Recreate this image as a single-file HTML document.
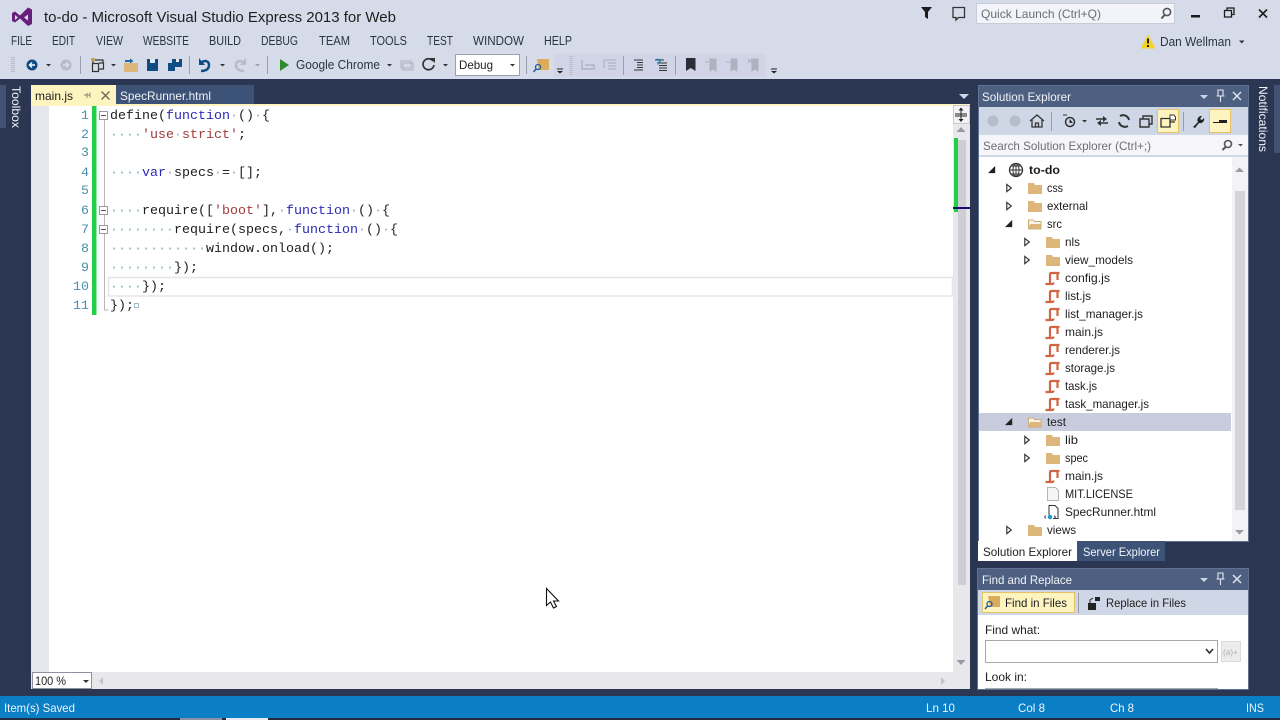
<!DOCTYPE html>
<html><head><meta charset="utf-8"><title>to-do - Microsoft Visual Studio Express 2013 for Web</title>
<style>
html,body{margin:0;padding:0;background:#2b3752;overflow:hidden;width:1280px;height:720px}
svg{display:block}
text{font-family:"Liberation Sans",sans-serif;font-size:12px;fill:#1e1e1e;white-space:pre}
.m{fill:#2b3440;font-size:12.5px}
.t{font-size:12px;fill:#1e1e1e}
.w{fill:#f2f4f8}
.c{font-family:"Liberation Mono",monospace;font-size:13.33px;fill:#1e1e1e}
.n{font-family:"Liberation Mono",monospace;font-size:13.33px;fill:#4c8fa8}
.k{fill:#2a2ab8}.s{fill:#a33a3a}.d{fill:#8fb2c0}
</style></head><body>
<svg width="1280" height="720" viewBox="0 0 1280 720" xmlns="http://www.w3.org/2000/svg">
<defs>
<symbol id="fo" viewBox="0 0 16 16" overflow="visible"><path d="M1 3h6l1 2h7v9H1z" fill="#dcb67a"/></symbol>
<symbol id="fp" viewBox="0 0 16 16" overflow="visible"><path d="M1.500 13V4h5l1 1.500h6.500V13z" fill="#f7f3e8" stroke="#c9ad78"/><path d="M1 13l2-5h12l-2 5z" fill="#dcb67a"/></symbol>
<symbol id="js" viewBox="0 0 16 16" overflow="visible"><path d="M5 13V4.500Q5 3 6.500 3H14.500M12.500 3V10M0.500 14H7Q8.500 14 8.500 12.500" fill="none" stroke="#cf6644" stroke-width="2.200"/></symbol>
<symbol id="gr" viewBox="0 0 10 10"><path d="M2 1L7 5 2 9z" fill="#fff" stroke="#333" stroke-width="1.300"/></symbol>
<symbol id="ex" viewBox="0 0 10 10"><path d="M8 1v8H0z" fill="#222"/></symbol>
</defs>

<!-- chrome background -->
<rect width="1280" height="79" fill="#d6dbe9"/>
<rect y="79" width="1280" height="641" fill="#2b3752"/>

<!-- logo + title -->
<path fill-rule="evenodd" fill="#68217a" d="M12 13l3-1.500 5 4L28 7.500l4 2V24l-4 2-8-7.500-5 4-3-1.500zM15 15v5l3-2.500zM24 17.500l4 3v-6z"/>
<text x="44" y="22" font-size="15" style="font-size:15px" fill="#1e1e1e" textLength="352" lengthAdjust="spacingAndGlyphs">to-do - Microsoft Visual Studio Express 2013 for Web</text>

<!-- menu -->
<text class="m" x="11" y="45" textLength="21" lengthAdjust="spacingAndGlyphs">FILE</text>
<text class="m" x="52" y="45" textLength="23" lengthAdjust="spacingAndGlyphs">EDIT</text>
<text class="m" x="96" y="45" textLength="27" lengthAdjust="spacingAndGlyphs">VIEW</text>
<text class="m" x="143" y="45" textLength="46" lengthAdjust="spacingAndGlyphs">WEBSITE</text>
<text class="m" x="209" y="45" textLength="32" lengthAdjust="spacingAndGlyphs">BUILD</text>
<text class="m" x="261" y="45" textLength="37" lengthAdjust="spacingAndGlyphs">DEBUG</text>
<text class="m" x="319" y="45" textLength="31" lengthAdjust="spacingAndGlyphs">TEAM</text>
<text class="m" x="370" y="45" textLength="37" lengthAdjust="spacingAndGlyphs">TOOLS</text>
<text class="m" x="427" y="45" textLength="26" lengthAdjust="spacingAndGlyphs">TEST</text>
<text class="m" x="473" y="45" textLength="51" lengthAdjust="spacingAndGlyphs">WINDOW</text>
<text class="m" x="544" y="45" textLength="28" lengthAdjust="spacingAndGlyphs">HELP</text>

<!-- top right -->
<path d="M921 7h11l-4 5v7l-3-2v-5z" fill="#1b1b1b"/>
<path d="M953 7.500h11.500v10h-6l-2.500 2.500v-2.500h-3z" fill="none" stroke="#333" stroke-width="1.300"/>
<rect x="976.500" y="3.500" width="198" height="20" fill="#f3f4f9" stroke="#c8ccda"/>
<text x="981" y="18" fill="#6d6d75" style="fill:#6d6d75" textLength="120" lengthAdjust="spacingAndGlyphs">Quick Launch (Ctrl+Q)</text>
<circle cx="1167" cy="12" r="3.600" fill="none" stroke="#555" stroke-width="1.600"/><path d="M1164.500 15l-3 3.500" stroke="#555" stroke-width="2"/>
<rect x="1191" y="15" width="9" height="2.500" fill="#1b1b1b"/>
<path d="M1224.500 10.500h7v6.500h-7zM1227 10.500V8h7v6.500h-2.500" fill="none" stroke="#1b1b1b" stroke-width="1.300"/>
<path d="M1259 9.500l8 8M1267 9.500l-8 8" stroke="#1b1b1b" stroke-width="1.600"/>
<path d="M1148 34.500l7.500 14h-15z" fill="#f5d327"/><rect x="1147" y="38.500" width="2" height="5" fill="#222"/><rect x="1147" y="45" width="2" height="2" fill="#222"/>
<text x="1160" y="46" class="m" textLength="71" lengthAdjust="spacingAndGlyphs">Dan Wellman</text>
<path d="M1239 40.500h5.500l-2.700 3z" fill="#333"/>

<!-- toolbar -->
<path d="M12 57v15M14 57v15" stroke="#9a9eaa" stroke-width="1" stroke-dasharray="1 1"/>
<circle cx="32" cy="65" r="5.500" fill="#0e4c84"/><path d="M35 65h-5M32 62.500L29.500 65l2.500 2.500" stroke="#fff" stroke-width="1.400" fill="none"/>
<path d="M46 64h5l-2.500 2.500z" fill="#333"/>
<circle cx="66" cy="65" r="5.500" fill="#b8bcc8"/><path d="M63 65h5M66 62.500l2.500 2.500-2.500 2.500" stroke="#dde0ea" stroke-width="1.400" fill="none"/>
<rect x="80" y="56" width="1" height="18" fill="#9a9eaa"/>
<path d="M93 63v-3h10v3M92.500 63.500h6v8h-6zM99 63h4.500v6H99" fill="none" stroke="#333" stroke-width="1.200"/><rect x="91" y="58" width="4" height="3" fill="#c9a35a"/>
<path d="M111 64h5l-2.500 2.500z" fill="#333"/>
<path d="M124 63h14v9h-14z" fill="#dcb67a"/><path d="M125 61h6" stroke="#1f6aa5" stroke-width="2"/><path d="M130 58.500l3.500 2.500-3.500 2.500z" fill="#1f6aa5"/>
<path d="M147 59h11v12h-11z" fill="#0e4c84"/><rect x="150" y="59" width="5" height="4" fill="#e5e8f2"/>
<path d="M168 63h7v8h-7zM172 59h10v8h-7v-4h-3z" fill="#0e4c84"/><rect x="176" y="59" width="3" height="3" fill="#e5e8f2"/>
<rect x="189" y="56" width="1" height="18" fill="#9a9eaa"/>
<path d="M201 71c5 0 8-2 8-6s-4-5-7-3" fill="none" stroke="#0e4c84" stroke-width="2.500"/><path d="M199 58v7h6z" fill="#0e4c84"/>
<path d="M220 64h5l-2.500 2.500z" fill="#333"/>
<path d="M244 71c-5 0-8-2-8-6s4-5 7-3" fill="none" stroke="#b8bcc8" stroke-width="2.500"/><path d="M246 58v7h-6z" fill="#b8bcc8"/>
<path d="M255 64h5l-2.500 2.500z" fill="#9ea2ae"/>
<rect x="267" y="56" width="1" height="18" fill="#9a9eaa"/>
<path d="M280 59l9 6-9 6z" fill="#2e8b2e"/>
<text x="296" y="69" class="m" textLength="84" lengthAdjust="spacingAndGlyphs">Google Chrome</text>
<path d="M387 64h5l-2.500 2.500z" fill="#333"/>
<path d="M401 61h10v7h-10zM403 63h10v7h-10z" fill="none" stroke="#aeb2bf"/>
<path d="M433 61a5.500 5.500 0 1 0 1 4" fill="none" stroke="#333" stroke-width="1.700"/><path d="M430 58h5v5z" fill="#333"/>
<path d="M443 64h5l-2.500 2.500z" fill="#333"/>
<rect x="455.500" y="54.500" width="64" height="21" fill="#fff" stroke="#9ba0ae"/>
<text x="459" y="69" class="t" textLength="34" lengthAdjust="spacingAndGlyphs">Debug</text>
<path d="M510 64h5l-2.500 2.500z" fill="#333"/>
<rect x="526" y="56" width="1" height="18" fill="#9a9eaa"/>
<path d="M537 59h12v11h-10z" fill="#dcab5c"/><circle cx="538" cy="67" r="2.500" fill="none" stroke="#1f5e98" stroke-width="1.300"/><path d="M536 69l-2.500 3" stroke="#1f5e98" stroke-width="1.500"/>
<rect x="554" y="54" width="211" height="23" fill="#d0d4e6"/>
<path d="M557 69h6" stroke="#222" stroke-width="1"/><path d="M557 71h6l-3 2.500z" fill="#222"/>
<path d="M570 56v20M572 56v20" stroke="#a4a8b5" stroke-width="1" stroke-dasharray="1 1"/>
<path d="M582 60v9h12v-4h-9" fill="none" stroke="#aeb2bf" stroke-width="1.400"/>
<path d="M604 60h12M608 63h8M608 66h8M608 69h8M604 60v8" fill="none" stroke="#aeb2bf" stroke-width="1.300"/>
<rect x="623" y="56" width="1" height="19" fill="#9a9eaa"/>
<path d="M634 60h9M637 62.500h6M637 65h6M637 67.500h6M634 70h9" stroke="#333" stroke-width="1"/>
<path d="M655 60h9M659 63h8M659 65.500h8M659 68h8M659 70.500h8" stroke="#333" stroke-width="1"/><path d="M656 59.500h4v3h-2v2" fill="none" stroke="#1a7ca0" stroke-width="1.300"/>
<rect x="675" y="56" width="1" height="19" fill="#9a9eaa"/>
<path d="M686 58h9.500v13l-4.700-3-4.800 3z" fill="#2d2d38"/>
<path d="M710 59h6v12l-3-2-3 2zM705 62h4" fill="#aeb2bf" stroke="#aeb2bf"/>
<path d="M731 59h6v12l-3-2-3 2zM726 62h4" fill="#aeb2bf" stroke="#aeb2bf"/>
<path d="M752 59h6v12l-3-2-3 2zM748 59l4 4M752 59l-4 4" fill="#aeb2bf" stroke="#aeb2bf"/>
<path d="M771 69h6" stroke="#222"/><path d="M771 71h6l-3 2.500z" fill="#222"/>

<!-- toolbox -->
<rect x="0" y="85" width="6" height="43" fill="#435272"/>
<text transform="translate(12 86) rotate(90)" x="0" y="0" class="w" textLength="42" lengthAdjust="spacingAndGlyphs">Toolbox</text>

<!-- tabs -->
<rect x="31" y="85" width="85" height="19" fill="#fdf4bf"/>
<text x="35" y="100" class="t" textLength="38" lengthAdjust="spacingAndGlyphs">main.js</text>
<path d="M84 95h6M87 93v5M90 92.500v5" stroke="#8a8468" stroke-width="1" fill="none"/>
<path d="M101.500 91.500l8 8M109.500 91.500l-8 8" stroke="#6f6a55" stroke-width="1.400"/>
<rect x="116" y="85" width="138" height="19" fill="#3d5277"/>
<text x="120" y="100" class="w" textLength="91" lengthAdjust="spacingAndGlyphs">SpecRunner.html</text>
<path d="M959 94h10l-5 5z" fill="#cfd6e5"/>
<rect x="31" y="104" width="939" height="2" fill="#fdf4bf"/>

<!-- editor -->
<rect x="31" y="106" width="922" height="566" fill="#fff"/>
<rect x="31" y="106" width="18" height="566" fill="#e6e7ed"/>
<rect x="92" y="106" width="4.500" height="209" fill="#22d048"/>
<path d="M104.500 120v190h4M104.500 215v15" stroke="#b8b8b8" fill="none"/>
<rect x="108.500" y="277.500" width="844" height="18.500" fill="#fff" stroke="#e6e6e6" stroke-width="1.500"/>
<g fill="#fff" stroke="#9a9a9a"><rect x="99.500" y="111.500" width="8" height="8"/><rect x="99.500" y="206.500" width="8" height="8"/><rect x="99.500" y="225.500" width="8" height="8"/></g>
<path d="M101 115.500h5M101 210.500h5M101 229.500h5" stroke="#555"/>
<g text-anchor="end">
<text class="n" x="89" y="119">1</text><text class="n" x="89" y="138">2</text><text class="n" x="89" y="156">3</text><text class="n" x="89" y="176">4</text><text class="n" x="89" y="194">5</text><text class="n" x="89" y="214">6</text><text class="n" x="89" y="233">7</text><text class="n" x="89" y="252">8</text><text class="n" x="89" y="271">9</text><text class="n" x="89" y="290">10</text><text class="n" x="89" y="309">11</text>
</g>
<text class="c" x="110" y="119">define(<tspan class="k">function</tspan><tspan class="d">·</tspan>()<tspan class="d">·</tspan>{</text>
<text class="c" x="110" y="138"><tspan class="d">····</tspan><tspan class="s">'use</tspan><tspan class="d">·</tspan><tspan class="s">strict'</tspan>;</text>
<text class="c" x="110" y="176"><tspan class="d">····</tspan><tspan class="k">var</tspan><tspan class="d">·</tspan>specs<tspan class="d">·</tspan>=<tspan class="d">·</tspan>[];</text>
<text class="c" x="110" y="214"><tspan class="d">····</tspan>require([<tspan class="s">'boot'</tspan>],<tspan class="d">·</tspan><tspan class="k">function</tspan><tspan class="d">·</tspan>()<tspan class="d">·</tspan>{</text>
<text class="c" x="110" y="233"><tspan class="d">········</tspan>require(specs,<tspan class="d">·</tspan><tspan class="k">function</tspan><tspan class="d">·</tspan>()<tspan class="d">·</tspan>{</text>
<text class="c" x="110" y="252"><tspan class="d">············</tspan>window.onload();</text>
<text class="c" x="110" y="271"><tspan class="d">········</tspan>});</text>
<text class="c" x="110" y="290"><tspan class="d">····</tspan>});</text>
<text class="c" x="110" y="309">});</text>
<rect x="134.500" y="303.500" width="4" height="4" fill="none" stroke="#9dbcc8"/>

<!-- editor scrollbars -->
<rect x="953" y="106" width="17" height="583" fill="#e8e8ec"/>
<rect x="953.500" y="105.500" width="16" height="18" fill="#f3f3f6" stroke="#c9c9d0"/>
<path d="M961 108v13M955 114h12M955 116h12" stroke="#222" stroke-width="1"/><path d="M958.500 110.500l2.500-3 2.500 3zM958.500 119l2.500 3 2.500-3z" fill="#222"/>
<path d="M956.500 132l4.500-5 4.500 5z" fill="#9a9aa0"/>
<rect x="958" y="140" width="8" height="445" fill="#cdcdd3"/>
<rect x="954" y="138" width="4" height="74" fill="#22d048"/>
<rect x="953" y="207" width="17" height="2" fill="#10106e"/>
<path d="M956.500 660l4.500 5 4.500-5z" fill="#9a9aa0"/>
<rect x="31" y="672" width="939" height="17" fill="#e8e8ec"/>
<rect x="32.500" y="672.500" width="59" height="16" fill="#fff" stroke="#8e92a0"/>
<text x="35" y="685" class="t" textLength="31" lengthAdjust="spacingAndGlyphs">100 %</text>
<path d="M83 680h6l-3 3z" fill="#333"/>
<path d="M103 677v8l-4-4z" fill="#c4c4c8"/><path d="M941 677v8l4-4z" fill="#c4c4c8"/>

<!-- solution explorer -->
<rect x="978" y="85" width="271" height="457" fill="#5f7291"/>
<rect x="979" y="86" width="269" height="21" fill="#4d6082"/>
<text x="982" y="101" class="w" textLength="89" lengthAdjust="spacingAndGlyphs">Solution Explorer</text>
<path d="M1200 95h8l-4 4z" fill="#cfd6e5"/>
<path d="M1218 90h5v6h-5zM1216.500 96h8M1220.500 96v6" stroke="#e5e8f2" fill="none" stroke-width="1.100"/>
<path d="M1233 92l8 8M1241 92l-8 8" stroke="#dfe3ec" stroke-width="1.500"/>
<rect x="979" y="107" width="269" height="28" fill="#cfd6e5"/>
<circle cx="993" cy="121" r="5.500" fill="#b8bcc8"/><circle cx="1015" cy="121" r="5.500" fill="#b8bcc8"/>
<path d="M1030 121l7-6 7 6M1032 120v7h10v-7M1035.500 127v-4h3v4" fill="none" stroke="#333" stroke-width="1.300"/>
<rect x="1051" y="112" width="1" height="19" fill="#9a9eaa"/>
<circle cx="1070" cy="122" r="4.500" fill="none" stroke="#333" stroke-width="1.500"/><path d="M1070 119.500v3h2.500M1063 115h4" stroke="#333"/>
<path d="M1082 120h5l-2.500 2.500z" fill="#333"/>
<path d="M1096 119h9M1108 123h-9" stroke="#333" stroke-width="1.600"/><path d="M1103 116l4 3-4 3zM1101 120l-4 3 4 3z" fill="#333"/>
<path d="M1120 116a6 6 0 0 1 9 4M1128 126a6 6 0 0 1-9-4" fill="none" stroke="#333" stroke-width="2"/>
<path d="M1140 119h9v8h-9zM1143 119v-3h9v8h-3" fill="none" stroke="#333" stroke-width="1.400"/>
<rect x="1157.500" y="109.500" width="21" height="23" fill="#fdf4bf" stroke="#e5c365"/>
<path d="M1161 118.500h9v8.500h-9zM1170 122h5" fill="none" stroke="#333" stroke-width="1.300"/><path d="M1170 115h4l1.500 2v3h-5.500z" fill="#fff" stroke="#333"/>
<rect x="1183" y="112" width="1" height="19" fill="#9a9eaa"/>
<path d="M1193 127l5-5a4 4 0 0 1 4-6l-2 3 2 1 2-2a4 4 0 0 1-5 5l-4 5z" fill="#222"/>
<rect x="1209.500" y="109.500" width="21" height="23" fill="#fdf4bf" stroke="#e5c365"/>
<path d="M1213 122.500h14" stroke="#222" stroke-width="1"/><rect x="1219" y="120" width="8" height="3" fill="#222"/>
<rect x="979" y="135" width="269" height="22" fill="#cfd6e5"/>
<rect x="979" y="135" width="269" height="20" fill="#f6f6fa"/>
<text x="983" y="150" fill="#6d6d75" style="fill:#6d6d75" textLength="168" lengthAdjust="spacingAndGlyphs">Search Solution Explorer (Ctrl+;)</text>
<circle cx="1228" cy="144" r="3.500" fill="none" stroke="#555" stroke-width="1.600"/><path d="M1225.500 147l-3 3" stroke="#555" stroke-width="2"/>
<path d="M1238 144h5l-2.500 2.500z" fill="#555"/>
<rect x="979" y="157" width="269" height="384" fill="#fff"/>
<rect x="979" y="413" width="252" height="18" fill="#c9ccdc"/>
<rect x="1232" y="157" width="16" height="384" fill="#f3f3f6"/>
<rect x="1235" y="191" width="10" height="319" fill="#d4d4da"/>
<path d="M1235 172l4.500-4.500 4.500 4.500z" fill="#9a9aa0"/><path d="M1235 530l4.500 4.500 4.500-4.500z" fill="#9a9aa0"/>

<use href="#ex" x="988" y="165" width="9" height="9"/>
<circle cx="1016" cy="170" r="6.500" fill="none" stroke="#333" stroke-width="1.300"/><path d="M1009.500 170h13M1016 163.500v13M1011 166h10M1011 174h10" stroke="#333"/><ellipse cx="1016" cy="170" rx="3" ry="6.500" fill="none" stroke="#333"/>
<text x="1029" y="174" class="t" style="font-weight:bold" textLength="31" lengthAdjust="spacingAndGlyphs">to-do</text>

<use href="#gr" x="1005" y="183" width="9" height="10"/><use href="#fo" x="1027" y="180" width="16" height="16"/><text x="1047" y="192" class="t" textLength="16" lengthAdjust="spacingAndGlyphs">css</text>
<use href="#gr" x="1005" y="201" width="9" height="10"/><use href="#fo" x="1027" y="198" width="16" height="16"/><text x="1047" y="210" class="t" textLength="41" lengthAdjust="spacingAndGlyphs">external</text>
<use href="#ex" x="1005" y="219" width="9" height="9"/><use href="#fp" x="1027" y="216" width="16" height="16"/><text x="1047" y="228" class="t" textLength="15" lengthAdjust="spacingAndGlyphs">src</text>
<use href="#gr" x="1023" y="237" width="9" height="10"/><use href="#fo" x="1045" y="234" width="16" height="16"/><text x="1065" y="246" class="t" textLength="15" lengthAdjust="spacingAndGlyphs">nls</text>
<use href="#gr" x="1023" y="255" width="9" height="10"/><use href="#fo" x="1045" y="252" width="16" height="16"/><text x="1065" y="264" class="t" textLength="68" lengthAdjust="spacingAndGlyphs">view_models</text>
<use href="#js" x="1045" y="270" width="16" height="16"/><text x="1065" y="282" class="t" textLength="45" lengthAdjust="spacingAndGlyphs">config.js</text>
<use href="#js" x="1045" y="288" width="16" height="16"/><text x="1065" y="300" class="t" textLength="26" lengthAdjust="spacingAndGlyphs">list.js</text>
<use href="#js" x="1045" y="306" width="16" height="16"/><text x="1065" y="318" class="t" textLength="78" lengthAdjust="spacingAndGlyphs">list_manager.js</text>
<use href="#js" x="1045" y="324" width="16" height="16"/><text x="1065" y="336" class="t" textLength="38" lengthAdjust="spacingAndGlyphs">main.js</text>
<use href="#js" x="1045" y="342" width="16" height="16"/><text x="1065" y="354" class="t" textLength="55" lengthAdjust="spacingAndGlyphs">renderer.js</text>
<use href="#js" x="1045" y="360" width="16" height="16"/><text x="1065" y="372" class="t" textLength="50" lengthAdjust="spacingAndGlyphs">storage.js</text>
<use href="#js" x="1045" y="378" width="16" height="16"/><text x="1065" y="390" class="t" textLength="32" lengthAdjust="spacingAndGlyphs">task.js</text>
<use href="#js" x="1045" y="396" width="16" height="16"/><text x="1065" y="408" class="t" textLength="84" lengthAdjust="spacingAndGlyphs">task_manager.js</text>
<use href="#ex" x="1005" y="417" width="9" height="9"/><use href="#fp" x="1027" y="414" width="16" height="16"/><text x="1047" y="426" class="t" textLength="19" lengthAdjust="spacingAndGlyphs">test</text>
<use href="#gr" x="1023" y="435" width="9" height="10"/><use href="#fo" x="1045" y="432" width="16" height="16"/><text x="1065" y="444" class="t" textLength="13" lengthAdjust="spacingAndGlyphs">lib</text>
<use href="#gr" x="1023" y="453" width="9" height="10"/><use href="#fo" x="1045" y="450" width="16" height="16"/><text x="1065" y="462" class="t" textLength="23" lengthAdjust="spacingAndGlyphs">spec</text>
<use href="#js" x="1045" y="468" width="16" height="16"/><text x="1065" y="480" class="t" textLength="38" lengthAdjust="spacingAndGlyphs">main.js</text>
<path d="M1047.500 487.500h8l3 3v10h-11z" fill="#f6f6f6" stroke="#b5b5b5"/><text x="1065" y="498" class="t" textLength="68" lengthAdjust="spacingAndGlyphs">MIT.LICENSE</text>
<path d="M1049 515v-9.500h6l3 3v10h-5" fill="#fff" stroke="#333"/><circle cx="1050" cy="517" r="2.200" fill="#1c97d5"/><path d="M1046 515.500l-1.500 1.500 1.500 1.500M1054 515.500l1.500 1.500-1.500 1.500" stroke="#555" fill="none"/><text x="1065" y="516" class="t" textLength="91" lengthAdjust="spacingAndGlyphs">SpecRunner.html</text>
<use href="#gr" x="1005" y="525" width="9" height="10"/><use href="#fo" x="1027" y="522" width="16" height="16"/><text x="1047" y="534" class="t" textLength="29" lengthAdjust="spacingAndGlyphs">views</text>

<rect x="978" y="541" width="99" height="20" fill="#fff"/>
<text x="983" y="556" class="t" textLength="89" lengthAdjust="spacingAndGlyphs">Solution Explorer</text>
<rect x="1077" y="541" width="88" height="20" fill="#3d5277"/>
<text x="1083" y="556" class="w" textLength="77" lengthAdjust="spacingAndGlyphs">Server Explorer</text>

<!-- find and replace -->
<rect x="977" y="568" width="272" height="122" fill="#5f7291"/>
<rect x="978" y="569" width="270" height="21" fill="#4d6082"/>
<text x="982" y="584" class="w" textLength="90" lengthAdjust="spacingAndGlyphs">Find and Replace</text>
<path d="M1200 578h8l-4 4z" fill="#cfd6e5"/>
<path d="M1218 573h5v6h-5zM1216.500 579h8M1220.500 579v6" stroke="#e5e8f2" fill="none" stroke-width="1.100"/>
<path d="M1233 575l8 8M1241 575l-8 8" stroke="#dfe3ec" stroke-width="1.500"/>
<rect x="978" y="590" width="270" height="25" fill="#cfd6e5"/>
<rect x="982.500" y="592.500" width="92" height="20" fill="#fdf4bf" stroke="#e5c365"/>
<path d="M988 596h12v11h-10z" fill="#dcab5c"/><circle cx="989.500" cy="604" r="2.500" fill="none" stroke="#1f5e98" stroke-width="1.300"/><path d="M987.500 606l-2.500 3" stroke="#1f5e98" stroke-width="1.500"/>
<text x="1005" y="607" class="t" textLength="62" lengthAdjust="spacingAndGlyphs">Find in Files</text>
<rect x="1078" y="593" width="1" height="20" fill="#9a9eaa"/>
<path d="M1088 603h8v7h-8z" fill="#222"/><path d="M1090 603v-3l3-2" stroke="#222" fill="none"/><rect x="1095" y="597" width="5" height="4" fill="#222"/>
<text x="1106" y="607" class="t" textLength="80" lengthAdjust="spacingAndGlyphs">Replace in Files</text>
<rect x="978" y="615" width="270" height="74" fill="#fff"/>
<text x="985" y="634" class="t" textLength="55" lengthAdjust="spacingAndGlyphs">Find what:</text>
<rect x="985.500" y="640.500" width="232" height="22" fill="#fff" stroke="#a8a8a8"/>
<path d="M1206 649l3.500 4 3.500-4" fill="none" stroke="#333" stroke-width="1.700"/>
<rect x="1221.500" y="641.500" width="19" height="20" fill="#ececec" stroke="#dcdcdc"/>
<text x="1223" y="655" style="font-size:8px;fill:#b0b0b0" textLength="15" lengthAdjust="spacingAndGlyphs">(a)+</text>
<text x="985" y="681" class="t" textLength="42" lengthAdjust="spacingAndGlyphs">Look in:</text>
<rect x="985" y="688" width="233" height="1" fill="#a8a8a8"/>

<!-- notifications -->
<rect x="1274" y="85" width="6" height="68" fill="#435272"/>
<text transform="translate(1259 86) rotate(90)" x="0" y="0" class="w" textLength="66" lengthAdjust="spacingAndGlyphs">Notifications</text>

<!-- status -->
<rect x="0" y="696" width="1280" height="22" fill="#0a7fc6"/>
<rect x="0" y="718" width="1280" height="2" fill="#222c3e"/>
<rect x="180" y="718" width="42" height="2" fill="#8b93a3"/><rect x="226" y="718" width="42" height="2" fill="#e8e8ee"/>
<g>
<text x="4" y="712" class="w" textLength="71" lengthAdjust="spacingAndGlyphs">Item(s) Saved</text>
<text x="926" y="712" class="w" textLength="29" lengthAdjust="spacingAndGlyphs">Ln 10</text>
<text x="1018" y="712" class="w" textLength="27" lengthAdjust="spacingAndGlyphs">Col 8</text>
<text x="1110" y="712" class="w" textLength="24" lengthAdjust="spacingAndGlyphs">Ch 8</text>
<text x="1246" y="712" class="w" textLength="18" lengthAdjust="spacingAndGlyphs">INS</text>
</g>

<!-- cursor -->
<path d="M546.500 588.500v17l4-3.500 3 6 3-1.500-3-5.500h5z" fill="#fff" stroke="#111" stroke-width="1.100"/>
</svg>
</body></html>
